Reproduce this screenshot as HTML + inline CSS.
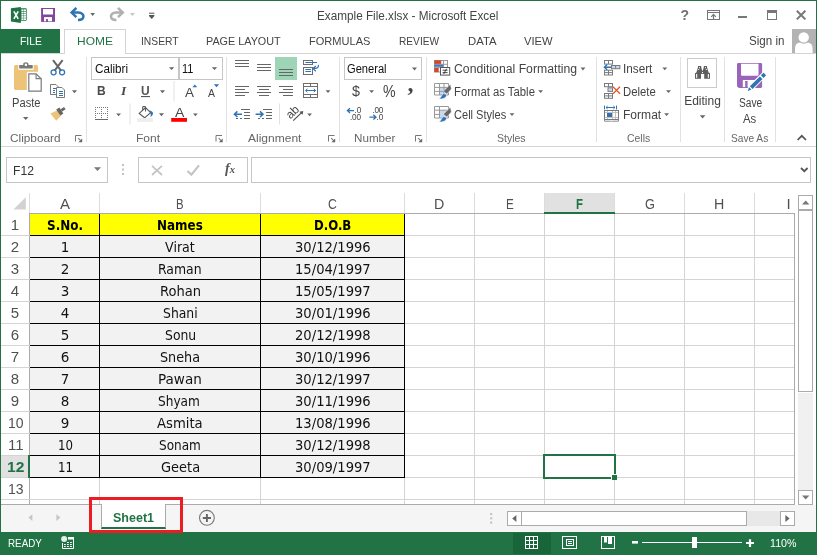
<!DOCTYPE html>
<html lang="en"><head><meta charset="utf-8"><title>Example File.xlsx - Microsoft Excel</title>
<style>
html,body{margin:0;padding:0;background:#fff;}
#app{position:relative;width:817px;height:555px;overflow:hidden;background:#fff;font-family:"Liberation Sans",sans-serif;}
#app div,#app svg,#app span{position:absolute;box-sizing:border-box;}
.t{white-space:pre;line-height:1;transform-origin:0 0;}
#frame{left:0;top:0;width:817px;height:555px;border:1px solid #217346;border-bottom:none;z-index:50;pointer-events:none;}
#titlebar{left:1px;top:1px;width:815px;height:28px;background:#fff;}
#tabs{left:1px;top:29px;width:815px;height:25px;border-bottom:1px solid #d4d4d4;}
#tab-file{left:0;top:0;width:59px;height:24px;background:#217346;}
#tab-home{left:63px;top:0;width:62px;height:25px;background:#fff;border:1px solid #d4d4d4;border-bottom:none;}
#ribbon{left:1px;top:54px;width:815px;height:93px;background:#fff;border-bottom:1px solid #d4d4d4;}
.sep{width:1px;background:#e2e2e2;top:3px;height:85px;}
.box{border:1px solid #c6c6c6;background:#fff;}
#fbar{left:1px;top:147px;width:815px;height:46px;background:#fff;}
#grid{left:1px;top:193px;width:794px;height:312px;background:#fff;overflow:hidden;}
.vl{width:1px;background:#d4d4d4;top:0;}
.hl{height:1px;background:#d4d4d4;left:0;}
.bk{background:#000;}
#sheetbar{left:1px;top:505px;width:815px;height:27px;background:#f5f5f5;}
#status{left:0;top:532px;width:817px;height:23px;background:#217346;}

</style></head>
<body>
<div id="app">
<div id="titlebar"></div>
<div id="tabs">
  <div id="tab-file"></div>
  <div id="tab-home"></div>
  <div id="avatar" style="left:791px;top:0;width:24px;height:24px;background:#b3b3b3;overflow:hidden;">
    <svg width="24" height="24" viewBox="0 0 24 24" style="left:0;top:0"><path d="M3 24 V19.4 Q3 13.4 8.4 13.4 H15 Q20.6 13.4 20.6 19.4 V24 Z" fill="#fff"/><circle cx="11.7" cy="8.4" r="6.3" fill="#b3b3b3"/><circle cx="11.7" cy="8.4" r="5.2" fill="#fff"/></svg>
  </div>
</div>
<div id="ribbon">
  <div class="sep" style="left:85px"></div>
  <div class="sep" style="left:225px"></div>
  <div class="sep" style="left:338px"></div>
  <div class="sep" style="left:425px"></div>
  <div class="sep" style="left:595px"></div>
  <div class="sep" style="left:679px"></div>
  <div class="sep" style="left:723px"></div>
  <div class="sep" style="left:774px"></div>
  <div class="box" style="left:90px;top:3px;width:88px;height:23px"></div>
  <div class="box" style="left:178px;top:3px;width:44px;height:23px"></div>
  <div class="box" style="left:343px;top:3px;width:78px;height:23px"></div>
  <div style="left:274px;top:3px;width:22px;height:23px;background:#9fd5b7"></div>
  <div class="box" style="left:686px;top:4px;width:30px;height:30px;border-color:#cbcbcb"></div>
</div>
<div id="fbar">
  <div class="box" style="left:5px;top:10px;width:102px;height:26px"></div>
  <div class="box" style="left:137px;top:10px;width:110px;height:26px"></div>
  <div class="box" style="left:250px;top:10px;width:560px;height:26px"></div>
</div>
<div id="grid">
<div style="left:543px;top:0;width:71px;height:20px;background:#e1e1e1"></div>
<div style="left:543px;top:19px;width:71px;height:2px;background:#217346;z-index:3"></div>
<div style="left:0;top:263px;width:28px;height:21px;background:#e1e1e1"></div>
<div style="left:27px;top:262px;width:2px;height:23px;background:#217346;z-index:3"></div>
<div class="vl" style="left:28px;top:0;height:20px;background:#dcdcdc"></div>
<div class="vl" style="left:98px;top:0;height:20px;background:#dcdcdc"></div>
<div class="vl" style="left:259px;top:0;height:20px;background:#dcdcdc"></div>
<div class="vl" style="left:403px;top:0;height:20px;background:#dcdcdc"></div>
<div class="vl" style="left:473px;top:0;height:20px;background:#dcdcdc"></div>
<div class="vl" style="left:543px;top:0;height:20px;background:#dcdcdc"></div>
<div class="vl" style="left:613px;top:0;height:20px;background:#dcdcdc"></div>
<div class="vl" style="left:683px;top:0;height:20px;background:#dcdcdc"></div>
<div class="vl" style="left:753px;top:0;height:20px;background:#dcdcdc"></div>
<div class="hl" style="left:28px;top:20px;width:765px;background:#ababab"></div>
<div class="vl" style="left:28px;top:20px;height:292px;background:#ababab"></div>
<div class="vl" style="left:98px;top:21px;height:291px"></div>
<div class="vl" style="left:259px;top:21px;height:291px"></div>
<div class="vl" style="left:403px;top:21px;height:291px"></div>
<div class="vl" style="left:473px;top:21px;height:291px"></div>
<div class="vl" style="left:543px;top:21px;height:291px"></div>
<div class="vl" style="left:613px;top:21px;height:291px"></div>
<div class="vl" style="left:683px;top:21px;height:291px"></div>
<div class="vl" style="left:753px;top:21px;height:291px"></div>
<div class="hl" style="left:0;top:42px;width:794px"></div>
<div class="hl" style="left:0;top:64px;width:794px"></div>
<div class="hl" style="left:0;top:86px;width:794px"></div>
<div class="hl" style="left:0;top:108px;width:794px"></div>
<div class="hl" style="left:0;top:130px;width:794px"></div>
<div class="hl" style="left:0;top:152px;width:794px"></div>
<div class="hl" style="left:0;top:174px;width:794px"></div>
<div class="hl" style="left:0;top:196px;width:794px"></div>
<div class="hl" style="left:0;top:218px;width:794px"></div>
<div class="hl" style="left:0;top:240px;width:794px"></div>
<div class="hl" style="left:0;top:262px;width:794px"></div>
<div class="hl" style="left:0;top:284px;width:794px"></div>
<div class="hl" style="left:0;top:306px;width:794px"></div>
<div class="vl" style="left:793px;top:20px;height:292px;background:#ababab"></div>
<div class="hl" style="left:0;top:311px;width:794px;background:#ababab"></div>
<div style="left:29px;top:21px;width:374px;height:21px;background:#ffff00"></div>
<div style="left:29px;top:43px;width:374px;height:241px;background:#f2f2f2"></div>
<div class="vl bk" style="left:98px;top:21px;height:264px"></div>
<div class="vl bk" style="left:259px;top:21px;height:264px"></div>
<div class="vl bk" style="left:403px;top:21px;height:264px"></div>
<div class="hl bk" style="left:29px;top:42px;width:375px"></div>
<div class="hl bk" style="left:29px;top:64px;width:375px"></div>
<div class="hl bk" style="left:29px;top:86px;width:375px"></div>
<div class="hl bk" style="left:29px;top:108px;width:375px"></div>
<div class="hl bk" style="left:29px;top:130px;width:375px"></div>
<div class="hl bk" style="left:29px;top:152px;width:375px"></div>
<div class="hl bk" style="left:29px;top:174px;width:375px"></div>
<div class="hl bk" style="left:29px;top:196px;width:375px"></div>
<div class="hl bk" style="left:29px;top:218px;width:375px"></div>
<div class="hl bk" style="left:29px;top:240px;width:375px"></div>
<div class="hl bk" style="left:29px;top:262px;width:375px"></div>
<div class="hl bk" style="left:29px;top:284px;width:375px"></div>
<div style="left:542px;top:261px;width:73px;height:25px;border:2px solid #217346;z-index:4"></div>
<div style="left:610px;top:281px;width:6px;height:6px;background:#217346;border:1px solid #fff;border-right:none;border-bottom:none;z-index:5"></div>
<svg width="14" height="14" style="left:11px;top:3px"><path d="M13.8 1.2 V13.6 H1.4 Z" fill="#d2d2d2"/></svg>
</div>
<div id="vscroll" style="left:798px;top:195px;width:15px;height:310px;background:#f0f0f0;">
  <div class="box" style="left:0;top:0;width:15px;height:15px;border-color:#ababab"></div>
  <div class="box" style="left:0;top:15px;width:15px;height:182px;border-color:#ababab"></div><div style="left:0;top:197px;width:15px;height:1px;background:#fff"></div>
  <div class="box" style="left:0;top:295px;width:15px;height:15px;border-color:#ababab"></div>
</div>
<div id="sheetbar">
  <div id="sheettab" style="left:100px;top:-1px;width:65px;height:25px;background:#fff;border-left:1px solid #ababab;border-right:1px solid #ababab;border-bottom:2px solid #217346"></div>
  <div id="hscroll" style="left:506px;top:6px;width:288px;height:15px;background:#e8e8e8">
    <div class="box" style="left:0;top:0;width:15px;height:15px;border-color:#ababab"></div>
    <div class="box" style="left:14px;top:0;width:226px;height:15px;border-color:#ababab"></div>
    <div class="box" style="left:273px;top:0;width:15px;height:15px;border-color:#ababab"></div>
  </div>
</div>
<div id="redbox" style="left:89px;top:497px;width:94px;height:36px;border:3px solid #ec1c24;z-index:20"></div>
<div id="status"></div>
<svg id="icons" width="817" height="555" viewBox="0 0 817 555" style="left:0;top:0;z-index:10;will-change:transform">
<g fill="#666" shape-rendering="crispEdges">
  <!-- top align -->
  <rect x="235" y="60" width="14" height="1"/><rect x="235" y="63" width="14" height="1"/><rect x="235" y="66" width="14" height="1"/>
  <!-- middle -->
  <rect x="257" y="64" width="14" height="1"/><rect x="257" y="67" width="14" height="1"/><rect x="257" y="70" width="14" height="1"/>
  <!-- bottom (selected) -->
  <rect x="279" y="69" width="14" height="1"/><rect x="279" y="72" width="14" height="1"/><rect x="279" y="75" width="14" height="1"/>
  <!-- left -->
  <rect x="235" y="86" width="14" height="1"/><rect x="235" y="89" width="10" height="1"/><rect x="235" y="92" width="14" height="1"/><rect x="235" y="95" width="10" height="1"/>
  <!-- center -->
  <rect x="257" y="86" width="14" height="1"/><rect x="259" y="89" width="10" height="1"/><rect x="257" y="92" width="14" height="1"/><rect x="259" y="95" width="10" height="1"/>
  <!-- right -->
  <rect x="279" y="86" width="14" height="1"/><rect x="283" y="89" width="10" height="1"/><rect x="279" y="92" width="14" height="1"/><rect x="283" y="95" width="10" height="1"/>
  <!-- decrease indent lines -->
  <rect x="241" y="109" width="9" height="1"/><rect x="244" y="112" width="6" height="1"/><rect x="244" y="115" width="6" height="1"/>
  <rect x="236" y="118" width="2" height="1"/><rect x="240" y="118" width="2" height="1"/><rect x="244" y="118" width="6" height="1"/>
  <!-- increase indent lines -->
  <rect x="263" y="109" width="9" height="1"/><rect x="266" y="112" width="6" height="1"/><rect x="266" y="115" width="6" height="1"/>
  <rect x="258" y="118" width="2" height="1"/><rect x="262" y="118" width="2" height="1"/><rect x="266" y="118" width="6" height="1"/>
</g>
<!-- indent arrows -->
<g fill="none" stroke="#2e74b5" stroke-width="1.5">
  <path d="M234.4 114.2 H242 M237.4 111.4 L234.4 114.2 L237.4 117"/>
  <path d="M255.6 114.2 H263 M260 111.4 L263 114.2 L260 117"/>
</g>
<rect x="279" y="103.5" width="1" height="21" fill="#e2e2e2"/>
<!-- wrap text -->
<g fill="#fff" stroke="#6e6e6e" stroke-width="1">
  <rect x="303.5" y="60.5" width="9" height="4"/>
  <rect x="303.5" y="67.5" width="9" height="7"/>
</g>
<g fill="none" stroke="#2e74b5" stroke-width="1">
  <path d="M305.4 62.5 H317"/>
  <path d="M305.4 69.5 H311 M305.4 71.5 H311"/>
  <path d="M318.4 64.8 C318.8 67.6 317 68.6 313.2 68.6 M315.8 66 L313 68.6 L315.8 71.2" stroke-width="1.2"/>
</g>
<!-- merge & center -->
<g fill="#fff" stroke="#6e6e6e" stroke-width="1">
  <rect x="303.5" y="83.5" width="14" height="14"/>
  <path d="M303.5 86.5 H317.5 M303.5 94.5 H317.5 M310.5 83.5 V86.5 M310.5 94.5 V97.5" fill="none"/>
</g>
<path d="M305.6 90.5 H315.6 M307.4 88.8 L305.6 90.5 L307.4 92.2 M313.8 88.8 L315.6 90.5 L313.8 92.2" fill="none" stroke="#2e74b5" stroke-width="1"/>
<path d="M325.6 90.2 H330.4 L328 93 Z" fill="#666"/>
<!-- orientation -->
<path d="M293.2 120.6 L301.6 112.6" fill="none" stroke="#505050" stroke-width="1.2"/>
<path d="M303.3 110.9 L299.4 111.7 L302.5 114.8 Z" fill="#505050"/>
<text x="0" y="0" transform="translate(290.6 119.6) rotate(-45)" font-family="Liberation Sans, sans-serif" font-size="12" fill="#444">ab</text>
<path d="M307.2 113.4 H312 L309.6 116.2 Z" fill="#666"/>
<!-- formula bar -->
<path d="M94 167.2 H101 L97.5 171 Z" fill="#777"/>
<g fill="#c2c2c2"><rect x="122" y="164" width="2" height="2"/><rect x="122" y="168.5" width="2" height="2"/><rect x="122" y="173" width="2" height="2"/></g>
<path d="M152 165.8 L162 175 M162 165.8 L152 175" stroke="#c4c4c4" stroke-width="1.7" fill="none"/>
<path d="M187.4 171 L191.4 174.6 L199 165.4" stroke="#c4c4c4" stroke-width="2.2" fill="none"/>
<path d="M801 168 L804.3 171.2 L807.6 168" stroke="#555" stroke-width="1.8" fill="none"/>
<!-- scroll arrows -->
<path d="M802 204.6 H809.4 L805.7 200.6 Z" fill="#777"/>
<path d="M802 495.4 H809.4 L805.7 499.4 Z" fill="#777"/>
<path d="M516.4 515 V522 L512.2 518.5 Z" fill="#666"/>
<path d="M785.4 515 V522 L789.6 518.5 Z" fill="#666"/>
<!-- sheet nav arrows -->
<path d="M32.4 514.2 V521 L28.4 517.6 Z" fill="#c6c6c6"/>
<path d="M56.4 514.2 V521 L60.4 517.6 Z" fill="#c6c6c6"/>
<!-- new sheet button -->
<circle cx="206.9" cy="517.8" r="7.4" fill="none" stroke="#7a7a7a" stroke-width="1.1"/>
<path d="M202.8 518 H211 M206.9 513.9 V522.1" stroke="#666" stroke-width="1.9" fill="none"/>
<!-- dots before hscroll -->
<g fill="#c0c0c0"><rect x="490.2" y="513" width="2" height="2"/><rect x="490.2" y="517.3" width="2" height="2"/><rect x="490.2" y="521.6" width="2" height="2"/></g>
<!-- status bar: macro icon -->
<g>
  <path d="M62.5 543 V548.5 H73.5 V537.6 H68" fill="none" stroke="#fff" stroke-width="1"/>
  <rect x="68" y="537.1" width="6" height="2.4" fill="#fff"/>
  <circle cx="64.1" cy="539.1" r="3.7" fill="#217346"/>
  <circle cx="64.1" cy="539.1" r="3" fill="#e6efe9"/>
  <g fill="#fff">
    <rect x="67" y="542" width="1.8" height="1"/><rect x="70" y="542" width="1.8" height="1"/>
    <rect x="64" y="544" width="1.8" height="1"/><rect x="67" y="544" width="1.8" height="1"/><rect x="70" y="544" width="1.8" height="1"/>
    <rect x="64" y="546" width="1.8" height="1"/><rect x="67" y="546" width="1.8" height="1"/><rect x="70" y="546" width="1.8" height="1"/>
  </g>
</g>
<!-- view buttons -->
<rect x="513" y="533" width="38" height="21" fill="#19653a"/>
<g fill="none" stroke="#fff" stroke-width="1" shape-rendering="crispEdges">
  <rect x="525.5" y="536.5" width="12" height="12"/>
  <path d="M529.5 536.5 V548.5 M533.5 536.5 V548.5 M525.5 540.5 H537.5 M525.5 544.5 H537.5"/>
  <rect x="562.5" y="536.5" width="14" height="12"/>
  <rect x="566.5" y="539.5" width="7" height="6"/>
  <path d="M568 541.5 H572 M568 543.5 H572"/>
  <rect x="601.5" y="536.5" width="13" height="12"/>
</g>
<rect x="604" y="536.5" width="3" height="6" fill="#fff"/><rect x="608" y="536.5" width="4" height="7.5" fill="#fff"/>
<!-- zoom slider -->
<rect x="632" y="541" width="6" height="2.6" fill="#fff"/>
<rect x="642" y="542" width="100" height="1" fill="#fff"/>
<rect x="692" y="537" width="5" height="11" fill="#fff"/>
<path d="M746 543 H754 M750 539.2 V547" stroke="#fff" stroke-width="2.2" fill="none"/>
<!-- Insert -->
<g fill="#fff" stroke="#7a7a7a" stroke-width="1">
  <rect x="604.5" y="60.5" width="8" height="3.6"/>
  <path d="M608.5 60.5 V64" fill="none"/>
  <rect x="604.5" y="70.2" width="8" height="4.8"/>
  <path d="M608.5 70.2 V75 M604.5 72.6 H612.5" fill="none"/>
  <rect x="611.5" y="65.5" width="8.4" height="3.2" fill="#c5daf0"/>
  <path d="M615.6 65.5 V68.7" fill="none"/>
</g>
<path d="M604.4 67.2 H611 M607.2 64.6 L604.4 67.2 L607.2 69.8" fill="none" stroke="#2e74b5" stroke-width="1.4"/>
<!-- Delete -->
<g fill="#fff" stroke="#7a7a7a" stroke-width="1">
  <rect x="604.5" y="83.5" width="8" height="3.2"/>
  <path d="M608.5 83.5 V86.7" fill="none"/>
  <rect x="608" y="87.8" width="4.5" height="3.6" fill="#c5daf0"/>
  <rect x="604.5" y="93.5" width="8" height="4.8"/>
  <path d="M608.5 93.5 V98.3 M604.5 95.9 H612.5" fill="none"/>
</g>
<path d="M613 86.8 L620 93.8 M620 86.8 L613 93.8" stroke="#e8562a" stroke-width="1.25" fill="none"/>
<!-- Format -->
<path d="M604.5 105.6 V109.4 M616.5 105.6 V109.4 M606 107.5 H615 M607.6 106 L606 107.5 L607.6 109 M613.4 106 L615 107.5 L613.4 109" stroke="#2e74b5" stroke-width="1" fill="none"/>
<g fill="#fff" stroke="#7a7a7a" stroke-width="1">
  <rect x="604.5" y="110.5" width="14" height="9"/>
  <path d="M607.5 110.5 V119.5 M612.5 110.5 V119.5 M615.5 110.5 V119.5 M604.5 112.5 H618.5 M604.5 117.5 H618.5" fill="none" stroke="#c2c2c2"/>
  <rect x="604.5" y="110.5" width="14" height="9" fill="none"/>
  <path d="M604.5 119.5 V121.2 H610.6 Q611.6 121.6 612.6 121.2 H618.5 V119.5" fill="none" stroke="#8a8a8a"/>
</g>
<rect x="607" y="113" width="5" height="4" fill="#2e74b5"/>
<path d="M662.4 67.4 H667.2 L664.8 70.2 Z" fill="#666"/>
<path d="M666 90.2 H671 L668.5 93 Z" fill="#666"/>
<path d="M664.2 113.2 H669 L666.6 116 Z" fill="#666"/>
<!-- Paste -->
<g>
  <rect x="14" y="64.9" width="24" height="25" rx="1.6" fill="#ecc377"/>
  <rect x="18.3" y="64" width="15.4" height="5.8" fill="#fff"/>
  <rect x="26.8" y="71.8" width="12" height="19" fill="#fff"/>
  <path d="M19.2 68.6 V64.9 H23.2 V63.8 Q23.2 62.2 25.9 62.2 Q28.5 62.2 28.5 63.8 V64.9 H32.7 V68.6 Z" fill="#787878"/>
  <rect x="24.8" y="63.7" width="2.2" height="2.2" fill="#fff"/>
  <path d="M28.8 73.8 H36 L41.2 78.8 V91.1 H28.8 Z" fill="#fff" stroke="#7a7a7a" stroke-width="1.2"/>
  <path d="M36.1 73.8 V78.6 H41.2" fill="none" stroke="#7a7a7a" stroke-width="1.1"/>
</g>
<path d="M23 117 H28.4 L25.7 120 Z" fill="#666"/>
<!-- Cut -->
<g fill="none">
  <path d="M53 60.2 L61.2 70.8 M62.6 60.2 L54.4 70.8" stroke="#666" stroke-width="2"/>
  <circle cx="53.6" cy="72.3" r="2.5" stroke="#2e74b5" stroke-width="1.3"/>
  <circle cx="62.1" cy="72.3" r="2.5" stroke="#2e74b5" stroke-width="1.3"/>
</g>
<!-- Copy -->
<g fill="#fff" stroke="#7a7a7a" stroke-width="1">
  <path d="M50.5 84.5 H56 L58.5 87 V94.5 H50.5 Z"/>
  <path d="M56.5 87.5 H62 L64.5 90 V97.5 H56.5 Z"/>
</g>
<path d="M52.5 88.5 H55.5 M52.5 90.5 H55 M52.5 92.5 H55 M58.5 91.5 H62.5 M58.5 93.5 H62.5 M58.5 95.5 H62.5" stroke="#2e74b5" stroke-width="1" fill="none" shape-rendering="crispEdges"/>
<path d="M72 90.2 H77 L74.5 93.2 Z" fill="#666"/>
<!-- Format painter -->
<g>
  <path d="M50.4 113.4 L57.6 110.2 L61.4 115.6 L56.2 120.8 Z" fill="#ecc377"/>
  <path d="M56.2 109.4 L59.4 107.6 L63.4 113.4 L60.4 115.4 Z" fill="#666"/>
  <path d="M60.6 109.2 L64 107 L65.6 109.2 L62.2 111.4 Z" fill="#666"/>
</g>
<!-- binoculars -->
<g fill="#5e5e5e">
  <path d="M695 78.8 V73.2 L696.4 72.6 L698 67.2 V66 H701.2 V67.2 L702 70 V74 H701 V78.8 Z"/>
  <path d="M710 78.8 V73.2 L708.6 72.6 L707 67.2 V66 H703.8 V67.2 L703 70 V74 H704.2 V78.8 Z"/>
  <rect x="701" y="70.6" width="3" height="3.4"/>
</g>
<g fill="#fff">
  <rect x="696.1" y="74" width="1.1" height="3.8"/><rect x="707.8" y="74" width="1.1" height="3.8"/>
  <rect x="699" y="67.2" width="1" height="1"/><rect x="705" y="67.2" width="1" height="1"/>
  <rect x="698.2" y="69" width="1" height="1"/><rect x="705.8" y="69" width="1" height="1"/>
  <rect x="702" y="72" width="1" height="1.2"/>
</g>
<path d="M699.8 115.2 H705.4 L702.6 118.4 Z" fill="#666"/>
<!-- Save As big icon -->
<g>
  <path d="M737 64.2 Q737 62.9 738.3 62.9 H760.8 Q762.1 62.9 762.1 64.2 V86.6 Q762.1 87.9 760.8 87.9 H738.8 L737 86.2 Z" fill="#9a64ba"/>
  <path d="M741 63.8 H758.5 V74.6 Q758.5 75.8 757.3 75.8 H742.2 Q741 75.8 741 74.6 Z" fill="#fff"/>
  <rect x="742.8" y="80" width="12.5" height="7.1" fill="#fff"/>
  <rect x="745.2" y="81" width="2.4" height="7" fill="#9a64ba"/>
  <path d="M763.5 72.7 L766.1 75.3 L752.4 89 L747.6 91 L749.4 86.4 Z" fill="#fff" stroke="#fff" stroke-width="2" stroke-linejoin="round"/>
  <path d="M759.9 76.5 L762.5 79.1 L752.5 88.9 L749.9 86.3 Z" fill="#2e74b5"/>
  <path d="M760.9 75.3 L763.5 72.7 L766.1 75.3 L763.5 77.9 Z" fill="#2e74b5"/>
  <path d="M749 87.2 L751.4 89.6 L747.8 91 Z" fill="#2e74b5"/>
</g>
<!-- collapse chevron -->
<path d="M797.6 140 L801.8 135.8 L806 140" fill="none" stroke="#555" stroke-width="1.7"/>
<!-- dropdown arrows in font boxes -->
<path d="M169 67.2 H174.2 L171.6 70 Z" fill="#666"/>
<path d="M211.8 67.2 H217.2 L214.5 70 Z" fill="#666"/>
<!-- underline for U + arrow -->
<rect x="141" y="96" width="9" height="1.1" fill="#555"/>
<path d="M160 90.2 H165 L162.5 93.2 Z" fill="#666"/>
<rect x="173.5" y="81" width="1" height="20.5" fill="#e2e2e2"/>
<!-- grow / shrink triangles -->
<path d="M192.4 87.2 H197.2 L194.8 84.4 Z" fill="#2e74b5"/>
<path d="M213.8 84.2 H219.2 L216.5 87.2 Z" fill="#2e74b5"/>
<!-- borders icon -->
<g fill="#787878" shape-rendering="crispEdges"><rect x="95" y="107" width="1" height="1"/><rect x="95" y="109" width="1" height="1"/><rect x="95" y="111" width="1" height="1"/><rect x="95" y="113" width="1" height="1"/><rect x="95" y="115" width="1" height="1"/><rect x="95" y="117" width="1" height="1"/><rect x="97" y="107" width="1" height="1"/><rect x="97" y="113" width="1" height="1"/><rect x="99" y="107" width="1" height="1"/><rect x="99" y="113" width="1" height="1"/><rect x="101" y="107" width="1" height="1"/><rect x="101" y="109" width="1" height="1"/><rect x="101" y="111" width="1" height="1"/><rect x="101" y="113" width="1" height="1"/><rect x="101" y="115" width="1" height="1"/><rect x="101" y="117" width="1" height="1"/><rect x="103" y="107" width="1" height="1"/><rect x="103" y="113" width="1" height="1"/><rect x="105" y="107" width="1" height="1"/><rect x="105" y="113" width="1" height="1"/><rect x="107" y="107" width="1" height="1"/><rect x="107" y="109" width="1" height="1"/><rect x="107" y="111" width="1" height="1"/><rect x="107" y="113" width="1" height="1"/><rect x="107" y="115" width="1" height="1"/><rect x="107" y="117" width="1" height="1"/></g>
<rect x="95" y="119" width="13" height="1" fill="#6a6a6a" shape-rendering="crispEdges"/>
<path d="M116.2 113.4 H121 L118.6 116.2 Z" fill="#666"/>
<rect x="129.5" y="103.5" width="1" height="21" fill="#e2e2e2"/>
<!-- fill bucket -->
<g>
  <path d="M145.6 107.6 L150.6 112.6 L144.6 117.8 L139.2 113.4 Z" fill="#fff" stroke="#555" stroke-width="1.1"/>
  <path d="M142.7 110 V107.4 Q142.7 106.5 143.6 106.5 H144.6 Q145.5 106.5 145.5 107.4 V111.4" fill="none" stroke="#555" stroke-width="1.1"/>
  <path d="M149.2 110.2 Q153.4 111.4 153 114 Q152.4 116 150.3 117.2 Q151.2 114.6 150.4 112.6 Z" fill="#2e74b5"/>
  <rect x="137.2" y="118" width="15.7" height="3.9" fill="#eeeeee"/>
</g>
<path d="M159 113.2 H164 L161.5 116.2 Z" fill="#666"/>
<!-- font color bar -->
<rect x="171.2" y="118" width="15.8" height="3.8" fill="#ff0000"/>
<path d="M193 113.4 H197.8 L195.4 116.2 Z" fill="#666"/>
<!-- dialog launchers -->
<path d="M75.5 141.5 V135.5 H81.5" fill="none" stroke="#777" stroke-width="1"/>
<path d="M78.2 138.2 L80.6 140.6" fill="none" stroke="#777" stroke-width="1.1"/>
<path d="M82.2 138.4 V142.2 H78.4 Z" fill="#666"/>
<path d="M216.0 141.5 V135.5 H222.0" fill="none" stroke="#777" stroke-width="1"/>
<path d="M218.7 138.2 L221.1 140.6" fill="none" stroke="#777" stroke-width="1.1"/>
<path d="M222.7 138.4 V142.2 H218.9 Z" fill="#666"/>
<path d="M328.5 141.5 V135.5 H334.5" fill="none" stroke="#777" stroke-width="1"/>
<path d="M331.2 138.2 L333.6 140.6" fill="none" stroke="#777" stroke-width="1.1"/>
<path d="M335.2 138.4 V142.2 H331.4 Z" fill="#666"/>
<path d="M415.5 141.5 V135.5 H421.5" fill="none" stroke="#777" stroke-width="1"/>
<path d="M418.2 138.2 L420.6 140.6" fill="none" stroke="#777" stroke-width="1.1"/>
<path d="M422.2 138.4 V142.2 H418.4 Z" fill="#666"/>
<path d="M412 67.6 H417 L414.5 70.4 Z" fill="#666"/>
<path d="M369.2 90.2 H374 L371.6 93 Z" fill="#666"/>
<!-- increase decimal -->
<path d="M347.4 110.6 H354 M350 108.2 L347.4 110.6 L350 113" fill="none" stroke="#2e74b5" stroke-width="1.3"/>
<text x="354.6" y="113" font-family="Liberation Sans, sans-serif" font-size="8.2" fill="#444" textLength="6.6">.0</text>
<text x="350" y="119.6" font-family="Liberation Sans, sans-serif" font-size="8.2" fill="#444" textLength="11">.00</text>
<!-- decrease decimal -->
<text x="372.4" y="113" font-family="Liberation Sans, sans-serif" font-size="8.2" fill="#444" textLength="11">.00</text>
<path d="M369.4 117.2 H376 M373.4 114.8 L376 117.2 L373.4 119.6" fill="none" stroke="#2e74b5" stroke-width="1.3"/>
<text x="376.6" y="119.6" font-family="Liberation Sans, sans-serif" font-size="8.2" fill="#444" textLength="6.6">.0</text>
<!-- Conditional Formatting -->
<g>
  <rect x="434.5" y="60.5" width="13" height="11.5" fill="#fff" stroke="#9a9a9a" stroke-width="1"/>
  <path d="M443.5 60.5 V72 M434.5 64.3 H447.5 M434.5 67.6 H447.5" stroke="#9a9a9a" stroke-width="1" fill="none"/>
  <rect x="434.4" y="60.4" width="6.8" height="3.5" fill="#d24726"/>
  <rect x="434.4" y="64.6" width="8.8" height="2.2" fill="#4472c4"/>
  <rect x="434.4" y="68" width="4.3" height="4.1" fill="#d24726"/>
  <rect x="440.5" y="67.5" width="9.2" height="7.6" fill="#fff" stroke="#555" stroke-width="1"/>
  <path d="M442.6 70.2 H447.6 M442.6 72.6 H447.6 M446.6 68.8 L443.6 74" stroke="#333" stroke-width="0.9" fill="none"/>
</g>
<!-- Format as Table -->
<g>
  <rect x="440" y="87.5" width="8.5" height="7.5" fill="#c5daf0"/>
  <path d="M434.5 83.5 H448.5 V95 H434.5 Z M439.5 83.5 V95 M444 83.5 V95 M434.5 87.4 H448.5 M434.5 91.4 H448.5" fill="none" stroke="#999" stroke-width="1"/>
  <path d="M450.4 84.2 L451.4 89 L446.8 94 L443.4 91.2 Z" fill="#666" stroke="#fff" stroke-width="0.5"/>
  <path d="M438.2 98.8 C441 98.6 441 95.6 443.4 93.6 L446.6 94.4 C447 97.4 443.6 99.4 438.2 98.8 Z" fill="#2e74b5" stroke="#fff" stroke-width="0.6"/>
</g>
<!-- Cell Styles -->
<g>
  <rect x="440" y="110.5" width="8.5" height="7" fill="#c5daf0"/>
  <path d="M434.5 106.5 H448.5 V118 H434.5 Z M439.5 106.5 V118 M434.5 110.2 H448.5 M434.5 114.4 H439.5" fill="none" stroke="#999" stroke-width="1"/>
  <path d="M450.4 107.2 L451.4 112 L446.8 117 L443.4 114.2 Z" fill="#666" stroke="#fff" stroke-width="0.5"/>
  <path d="M438.2 121.8 C441 121.6 441 118.6 443.4 116.6 L446.6 117.4 C447 120.4 443.6 122.4 438.2 121.8 Z" fill="#2e74b5" stroke="#fff" stroke-width="0.6"/>
</g>
<path d="M580.6 67.6 H585.4 L583 70.4 Z" fill="#666"/>
<path d="M538.2 90.2 H543 L540.6 93 Z" fill="#666"/>
<path d="M509.6 113.2 H514.4 L512 116 Z" fill="#666"/>
<!-- Excel logo -->
<g>
  <rect x="20" y="8.3" width="6.7" height="12.4" rx="0.8" fill="#217346"/>
  <g fill="#fff"><rect x="21.4" y="9.4" width="2.2" height="1.7"/><rect x="24" y="9.4" width="2" height="1.7"/><rect x="21.4" y="11.7" width="2.2" height="1.7"/><rect x="24" y="11.7" width="2" height="1.7"/><rect x="21.4" y="13.9" width="2.2" height="1.7"/><rect x="24" y="13.9" width="2" height="1.7"/><rect x="21.4" y="16.1" width="2.2" height="1.7"/><rect x="24" y="16.1" width="2" height="1.7"/><rect x="21.4" y="18.3" width="2.2" height="1.7"/><rect x="24" y="18.3" width="2" height="1.7"/></g>
  <path d="M10.9 8.3 L20.9 6.9 V22.9 L10.9 21.5 Z" fill="#217346"/>
  <path d="M13.9 11.3 L18.2 18.8 M18.2 11.3 L13.9 18.8" stroke="#fff" stroke-width="1.6" fill="none"/>
</g>
<!-- Save (QAT) -->
<g>
  <rect x="41.1" y="8" width="13.9" height="13.9" fill="#8246a0"/>
  <rect x="43" y="9" width="10" height="5.5" fill="#fff"/>
  <rect x="44" y="17.1" width="8" height="4.2" fill="#fff"/>
  <rect x="46.1" y="19" width="1.8" height="3" fill="#8246a0"/>
</g>
<!-- Undo -->
<g fill="none" stroke="#2e74b5" stroke-width="2.5" stroke-linecap="butt">
  <path d="M72.4 12.6 H78 C82.6 12.6 83.6 15.4 83.4 16.6 C83.2 18.8 81.2 20 78 20"/>
  <path d="M76.4 7.8 L71.6 12.6 L76.4 17.2"/>
</g>
<path d="M90.3 13 H95 L92.65 16 Z" fill="#666"/>
<!-- Redo -->
<g fill="none" stroke="#b0b0b0" stroke-width="2.5">
  <path d="M122 12.6 H116.4 C111.8 12.6 110.8 15.4 111 16.6 C111.2 18.8 113.2 20 116.4 20"/>
  <path d="M118 7.8 L122.8 12.6 L118 17.2"/>
</g>
<path d="M130 13 H134.8 L132.4 16 Z" fill="#c4c4c4"/>
<!-- Customize QAT -->
<rect x="149" y="12.7" width="5.4" height="1" fill="#555"/>
<rect x="149" y="15" width="5.4" height="1" fill="#555"/>
<path d="M149 16 H154.4 L151.7 19 Z" fill="#555"/>
<!-- Window controls -->
<g fill="none" stroke="#777" stroke-width="1">
  <rect x="707.5" y="10.5" width="12" height="9"/>
  <path d="M707.5 12.5 H719.5"/>
  <path d="M713.5 19.5 V14.5 M711.2 16.8 L713.5 14.4 L715.8 16.8" stroke-width="1.2"/>
</g>
<rect x="738" y="16" width="9" height="2" fill="#777"/>
<rect x="767.5" y="11.5" width="9" height="8" fill="none" stroke="#777" stroke-width="1"/>
<rect x="767" y="10" width="10" height="3" fill="#777"/>
<path d="M796.8 10.8 L805.4 19.4 M805.4 10.8 L796.8 19.4" stroke="#777" stroke-width="2" fill="none"/>

</svg>
<div id="frame"></div>

<div id="texts" style="left:0;top:0;z-index:15;will-change:transform">
<span class="t" style="left:317.0px;top:10.4px;font:400 12.5px/1 'Liberation Sans', sans-serif;color:#444;transform:scaleX(0.939);">Example File.xlsx - Microsoft Excel</span>
<span class="t" style="left:19.5px;top:36.2px;font:400 11.5px/1 'Liberation Sans', sans-serif;color:#fff;transform:scaleX(0.901);">FILE</span>
<span class="t" style="left:76.5px;top:36.2px;font:400 11.5px/1 'Liberation Sans', sans-serif;color:#217346;transform:scaleX(1.041);">HOME</span>
<span class="t" style="left:140.5px;top:36.2px;font:400 11.5px/1 'Liberation Sans', sans-serif;color:#444;transform:scaleX(0.896);">INSERT</span>
<span class="t" style="left:205.9px;top:36.2px;font:400 11.5px/1 'Liberation Sans', sans-serif;color:#444;transform:scaleX(0.940);">PAGE LAYOUT</span>
<span class="t" style="left:309.3px;top:36.2px;font:400 11.5px/1 'Liberation Sans', sans-serif;color:#444;transform:scaleX(0.961);">FORMULAS</span>
<span class="t" style="left:399.2px;top:36.2px;font:400 11.5px/1 'Liberation Sans', sans-serif;color:#444;transform:scaleX(0.884);">REVIEW</span>
<span class="t" style="left:468.0px;top:36.2px;font:400 11.5px/1 'Liberation Sans', sans-serif;color:#444;transform:scaleX(0.987);">DATA</span>
<span class="t" style="left:524.3px;top:36.2px;font:400 11.5px/1 'Liberation Sans', sans-serif;color:#444;transform:scaleX(0.973);">VIEW</span>
<span class="t" style="left:749.2px;top:35.0px;font:400 12px/1 'Liberation Sans', sans-serif;color:#444;transform:scaleX(0.967);">Sign in</span>
<span class="t" style="left:11.5px;top:97.0px;font:400 12px/1 'Liberation Sans', sans-serif;color:#444;transform:scaleX(0.929);">Paste</span>
<span class="t" style="left:10.0px;top:132.5px;font:400 11px/1 'Liberation Sans', sans-serif;color:#666;transform:scaleX(1.074);">Clipboard</span>
<span class="t" style="left:94.5px;top:63.0px;font:400 12px/1 'Liberation Sans', sans-serif;color:#111;transform:scaleX(0.973);">Calibri</span>
<span class="t" style="left:182.2px;top:63.0px;font:400 12px/1 'Liberation Sans', sans-serif;color:#111;transform:scaleX(0.914);">11</span>
<span class="t" style="left:97.0px;top:85.0px;font:700 12px/1 'Liberation Sans', sans-serif;color:#4a4a4a;transform:scaleX(1.000);">B</span>
<span class="t" style="left:120.9px;top:83.8px;font:700 13.5px/1 'Liberation Serif', serif;color:#4a4a4a;transform:scaleX(1.000);font-style:italic;">I</span>
<span class="t" style="left:141.1px;top:85.0px;font:700 12px/1 'Liberation Sans', sans-serif;color:#555;transform:scaleX(1.000);">U</span>
<span class="t" style="left:136.3px;top:132.5px;font:400 11px/1 'Liberation Sans', sans-serif;color:#666;transform:scaleX(1.095);">Font</span>
<span class="t" style="left:247.5px;top:132.5px;font:400 11px/1 'Liberation Sans', sans-serif;color:#666;transform:scaleX(1.092);">Alignment</span>
<span class="t" style="left:347.1px;top:63.0px;font:400 12px/1 'Liberation Sans', sans-serif;color:#111;transform:scaleX(0.927);">General</span>
<span class="t" style="left:351.6px;top:82.8px;font:400 15.5px/1 'Liberation Sans', sans-serif;color:#444;transform:scaleX(0.920);">$</span>
<span class="t" style="left:383.3px;top:82.8px;font:400 16.5px/1 'Liberation Sans', sans-serif;color:#444;transform:scaleX(0.860);">%</span>
<span class="t" style="left:407.5px;top:70.5px;font:700 24px/1 'Liberation Serif', serif;color:#444;transform:scaleX(1.000);">,</span>
<span class="t" style="left:353.8px;top:132.5px;font:400 11px/1 'Liberation Sans', sans-serif;color:#666;transform:scaleX(1.058);">Number</span>
<span class="t" style="left:453.5px;top:63.0px;font:400 12px/1 'Liberation Sans', sans-serif;color:#444;transform:scaleX(1.020);">Conditional Formatting</span>
<span class="t" style="left:453.5px;top:86.0px;font:400 12px/1 'Liberation Sans', sans-serif;color:#444;transform:scaleX(0.943);">Format as Table</span>
<span class="t" style="left:453.5px;top:108.5px;font:400 12px/1 'Liberation Sans', sans-serif;color:#444;transform:scaleX(0.921);">Cell Styles</span>
<span class="t" style="left:497.2px;top:132.5px;font:400 11px/1 'Liberation Sans', sans-serif;color:#666;transform:scaleX(0.954);">Styles</span>
<span class="t" style="left:623.0px;top:63.0px;font:400 12px/1 'Liberation Sans', sans-serif;color:#444;transform:scaleX(0.979);">Insert</span>
<span class="t" style="left:623.0px;top:86.0px;font:400 12px/1 'Liberation Sans', sans-serif;color:#444;transform:scaleX(0.943);">Delete</span>
<span class="t" style="left:623.0px;top:108.5px;font:400 12px/1 'Liberation Sans', sans-serif;color:#444;transform:scaleX(1.005);">Format</span>
<span class="t" style="left:626.5px;top:132.5px;font:400 11px/1 'Liberation Sans', sans-serif;color:#666;transform:scaleX(0.949);">Cells</span>
<span class="t" style="left:684.2px;top:95.0px;font:400 12px/1 'Liberation Sans', sans-serif;color:#444;transform:scaleX(1.000);">Editing</span>
<span class="t" style="left:738.5px;top:97.0px;font:400 12px/1 'Liberation Sans', sans-serif;color:#444;transform:scaleX(0.848);">Save</span>
<span class="t" style="left:742.5px;top:112.5px;font:400 12px/1 'Liberation Sans', sans-serif;color:#444;transform:scaleX(0.942);">As</span>
<span class="t" style="left:731.2px;top:132.5px;font:400 11px/1 'Liberation Sans', sans-serif;color:#666;transform:scaleX(0.922);">Save As</span>
<span class="t" style="left:12.5px;top:165.2px;font:400 12.5px/1 'Liberation Sans', sans-serif;color:#333;transform:scaleX(0.970);">F12</span>
<span class="t" style="left:225.0px;top:161.5px;font:700 14px/1 'Liberation Serif', serif;color:#555;transform:scaleX(1.000);font-style:italic;">f</span>
<span class="t" style="left:229.8px;top:165.2px;font:700 10.5px/1 'Liberation Serif', serif;color:#555;transform:scaleX(1.000);font-style:italic;">x</span>
<span class="t" style="left:7.5px;top:537.5px;font:400 11px/1 'Liberation Sans', sans-serif;color:#fff;transform:scaleX(0.894);">READY</span>
<span class="t" style="left:769.7px;top:538.2px;font:400 11.5px/1 'Liberation Sans', sans-serif;color:#fff;transform:scaleX(0.928);">110%</span>
<span class="t" style="left:112.5px;top:511.8px;font:700 12.5px/1 'Liberation Sans', sans-serif;color:#217346;transform:scaleX(0.998);">Sheet1</span>
<span class="t" style="left:60.0px;top:196.0px;font:400 15px/1 'Liberation Sans', sans-serif;color:#505050;transform:scaleX(1.000);">A</span>
<span class="t" style="left:176.4px;top:196.0px;font:400 15px/1 'Liberation Sans', sans-serif;color:#505050;transform:scaleX(0.760);">B</span>
<span class="t" style="left:328.1px;top:196.0px;font:400 15px/1 'Liberation Sans', sans-serif;color:#505050;transform:scaleX(0.820);">C</span>
<span class="t" style="left:434.3px;top:196.0px;font:400 15px/1 'Liberation Sans', sans-serif;color:#505050;transform:scaleX(0.950);">D</span>
<span class="t" style="left:506.3px;top:196.0px;font:400 15px/1 'Liberation Sans', sans-serif;color:#505050;transform:scaleX(0.780);">E</span>
<span class="t" style="left:576.4px;top:196.0px;font:700 15px/1 'Liberation Sans', sans-serif;color:#217346;transform:scaleX(0.760);">F</span>
<span class="t" style="left:645.0px;top:196.0px;font:400 15px/1 'Liberation Sans', sans-serif;color:#505050;transform:scaleX(0.850);">G</span>
<span class="t" style="left:714.1px;top:196.0px;font:400 15px/1 'Liberation Sans', sans-serif;color:#505050;transform:scaleX(0.950);">H</span>
<span class="t" style="left:786.4px;top:196.0px;font:400 15px/1 'Liberation Sans', sans-serif;color:#505050;transform:scaleX(1.000);">I</span>
<span class="t" style="left:10.8px;top:217.0px;font:400 15px/1 'Liberation Sans', sans-serif;color:#505050;transform:scaleX(1.000);">1</span>
<span class="t" style="left:10.8px;top:239.0px;font:400 15px/1 'Liberation Sans', sans-serif;color:#505050;transform:scaleX(1.000);">2</span>
<span class="t" style="left:10.8px;top:261.0px;font:400 15px/1 'Liberation Sans', sans-serif;color:#505050;transform:scaleX(1.000);">3</span>
<span class="t" style="left:10.8px;top:283.0px;font:400 15px/1 'Liberation Sans', sans-serif;color:#505050;transform:scaleX(1.000);">4</span>
<span class="t" style="left:10.8px;top:305.0px;font:400 15px/1 'Liberation Sans', sans-serif;color:#505050;transform:scaleX(1.000);">5</span>
<span class="t" style="left:10.8px;top:327.0px;font:400 15px/1 'Liberation Sans', sans-serif;color:#505050;transform:scaleX(1.000);">6</span>
<span class="t" style="left:10.8px;top:349.0px;font:400 15px/1 'Liberation Sans', sans-serif;color:#505050;transform:scaleX(1.000);">7</span>
<span class="t" style="left:10.8px;top:371.0px;font:400 15px/1 'Liberation Sans', sans-serif;color:#505050;transform:scaleX(1.000);">8</span>
<span class="t" style="left:10.8px;top:393.0px;font:400 15px/1 'Liberation Sans', sans-serif;color:#505050;transform:scaleX(1.000);">9</span>
<span class="t" style="left:8.0px;top:415.0px;font:400 15px/1 'Liberation Sans', sans-serif;color:#505050;transform:scaleX(0.935);">10</span>
<span class="t" style="left:8.0px;top:437.0px;font:400 15px/1 'Liberation Sans', sans-serif;color:#505050;transform:scaleX(1.001);">11</span>
<span class="t" style="left:7.0px;top:459.0px;font:700 15px/1 'Liberation Sans', sans-serif;color:#217346;transform:scaleX(1.043);">12</span>
<span class="t" style="left:8.0px;top:481.0px;font:400 15px/1 'Liberation Sans', sans-serif;color:#505050;transform:scaleX(0.935);">13</span>
<span class="t" style="left:165.1px;top:241.2px;font:400 13.5px/1 'DejaVu Sans', 'Liberation Sans', sans-serif;color:#111;transform:scaleX(0.937);">Virat</span>
<span class="t" style="left:295.1px;top:241.2px;font:400 13.5px/1 'DejaVu Sans', 'Liberation Sans', sans-serif;color:#111;transform:scaleX(0.973);">30/12/1996</span>
<span class="t" style="left:60.7px;top:241.2px;font:400 13.5px/1 'DejaVu Sans', 'Liberation Sans', sans-serif;color:#111;transform:scaleX(1.000);">1</span>
<span class="t" style="left:158.1px;top:263.2px;font:400 13.5px/1 'DejaVu Sans', 'Liberation Sans', sans-serif;color:#111;transform:scaleX(0.921);">Raman</span>
<span class="t" style="left:295.1px;top:263.2px;font:400 13.5px/1 'DejaVu Sans', 'Liberation Sans', sans-serif;color:#111;transform:scaleX(0.973);">15/04/1997</span>
<span class="t" style="left:60.7px;top:263.2px;font:400 13.5px/1 'DejaVu Sans', 'Liberation Sans', sans-serif;color:#111;transform:scaleX(1.000);">2</span>
<span class="t" style="left:159.5px;top:285.2px;font:400 13.5px/1 'DejaVu Sans', 'Liberation Sans', sans-serif;color:#111;transform:scaleX(0.969);">Rohan</span>
<span class="t" style="left:295.1px;top:285.2px;font:400 13.5px/1 'DejaVu Sans', 'Liberation Sans', sans-serif;color:#111;transform:scaleX(0.973);">15/05/1997</span>
<span class="t" style="left:60.7px;top:285.2px;font:400 13.5px/1 'DejaVu Sans', 'Liberation Sans', sans-serif;color:#111;transform:scaleX(1.000);">3</span>
<span class="t" style="left:162.5px;top:307.2px;font:400 13.5px/1 'DejaVu Sans', 'Liberation Sans', sans-serif;color:#111;transform:scaleX(0.920);">Shani</span>
<span class="t" style="left:295.1px;top:307.2px;font:400 13.5px/1 'DejaVu Sans', 'Liberation Sans', sans-serif;color:#111;transform:scaleX(0.973);">30/01/1996</span>
<span class="t" style="left:60.7px;top:307.2px;font:400 13.5px/1 'DejaVu Sans', 'Liberation Sans', sans-serif;color:#111;transform:scaleX(1.000);">4</span>
<span class="t" style="left:164.8px;top:329.2px;font:400 13.5px/1 'DejaVu Sans', 'Liberation Sans', sans-serif;color:#111;transform:scaleX(0.919);">Sonu</span>
<span class="t" style="left:295.1px;top:329.2px;font:400 13.5px/1 'DejaVu Sans', 'Liberation Sans', sans-serif;color:#111;transform:scaleX(0.973);">20/12/1998</span>
<span class="t" style="left:60.7px;top:329.2px;font:400 13.5px/1 'DejaVu Sans', 'Liberation Sans', sans-serif;color:#111;transform:scaleX(1.000);">5</span>
<span class="t" style="left:160.2px;top:351.2px;font:400 13.5px/1 'DejaVu Sans', 'Liberation Sans', sans-serif;color:#111;transform:scaleX(0.946);">Sneha</span>
<span class="t" style="left:295.1px;top:351.2px;font:400 13.5px/1 'DejaVu Sans', 'Liberation Sans', sans-serif;color:#111;transform:scaleX(0.973);">30/10/1996</span>
<span class="t" style="left:60.7px;top:351.2px;font:400 13.5px/1 'DejaVu Sans', 'Liberation Sans', sans-serif;color:#111;transform:scaleX(1.000);">6</span>
<span class="t" style="left:158.3px;top:373.2px;font:400 13.5px/1 'DejaVu Sans', 'Liberation Sans', sans-serif;color:#111;transform:scaleX(1.003);">Pawan</span>
<span class="t" style="left:295.1px;top:373.2px;font:400 13.5px/1 'DejaVu Sans', 'Liberation Sans', sans-serif;color:#111;transform:scaleX(0.973);">30/12/1997</span>
<span class="t" style="left:60.7px;top:373.2px;font:400 13.5px/1 'DejaVu Sans', 'Liberation Sans', sans-serif;color:#111;transform:scaleX(1.000);">7</span>
<span class="t" style="left:158.3px;top:395.2px;font:400 13.5px/1 'DejaVu Sans', 'Liberation Sans', sans-serif;color:#111;transform:scaleX(0.900);">Shyam</span>
<span class="t" style="left:295.1px;top:395.2px;font:400 13.5px/1 'DejaVu Sans', 'Liberation Sans', sans-serif;color:#111;transform:scaleX(0.973);">30/11/1996</span>
<span class="t" style="left:60.7px;top:395.2px;font:400 13.5px/1 'DejaVu Sans', 'Liberation Sans', sans-serif;color:#111;transform:scaleX(1.000);">8</span>
<span class="t" style="left:157.2px;top:417.2px;font:400 13.5px/1 'DejaVu Sans', 'Liberation Sans', sans-serif;color:#111;transform:scaleX(0.978);">Asmita</span>
<span class="t" style="left:295.1px;top:417.2px;font:400 13.5px/1 'DejaVu Sans', 'Liberation Sans', sans-serif;color:#111;transform:scaleX(0.973);">13/08/1996</span>
<span class="t" style="left:60.7px;top:417.2px;font:400 13.5px/1 'DejaVu Sans', 'Liberation Sans', sans-serif;color:#111;transform:scaleX(1.000);">9</span>
<span class="t" style="left:159.1px;top:439.2px;font:400 13.5px/1 'DejaVu Sans', 'Liberation Sans', sans-serif;color:#111;transform:scaleX(0.895);">Sonam</span>
<span class="t" style="left:295.1px;top:439.2px;font:400 13.5px/1 'DejaVu Sans', 'Liberation Sans', sans-serif;color:#111;transform:scaleX(0.973);">30/12/1998</span>
<span class="t" style="left:57.7px;top:439.2px;font:400 13.5px/1 'DejaVu Sans', 'Liberation Sans', sans-serif;color:#111;transform:scaleX(0.873);">10</span>
<span class="t" style="left:160.8px;top:461.2px;font:400 13.5px/1 'DejaVu Sans', 'Liberation Sans', sans-serif;color:#111;transform:scaleX(0.962);">Geeta</span>
<span class="t" style="left:295.1px;top:461.2px;font:400 13.5px/1 'DejaVu Sans', 'Liberation Sans', sans-serif;color:#111;transform:scaleX(0.973);">30/09/1997</span>
<span class="t" style="left:57.7px;top:461.2px;font:400 13.5px/1 'DejaVu Sans', 'Liberation Sans', sans-serif;color:#111;transform:scaleX(0.873);">11</span>
<span class="t" style="left:47.2px;top:219.2px;font:700 13.5px/1 'DejaVu Sans', 'Liberation Sans', sans-serif;color:#000;transform:scaleX(0.888);">S.No.</span>
<span class="t" style="left:157.2px;top:219.2px;font:700 13.5px/1 'DejaVu Sans', 'Liberation Sans', sans-serif;color:#000;transform:scaleX(0.886);">Names</span>
<span class="t" style="left:314.3px;top:219.2px;font:700 13.5px/1 'DejaVu Sans', 'Liberation Sans', sans-serif;color:#000;transform:scaleX(0.869);">D.O.B</span>
<span class="t" style="left:680.4px;top:8.0px;font:700 14px/1 'Liberation Sans', sans-serif;color:#707070;transform:scaleX(1.000);">?</span>
<span class="t" style="left:184.6px;top:87.0px;font:400 12px/1 'Liberation Sans', sans-serif;color:#444;transform:scaleX(1.120);">A</span>
<span class="t" style="left:207.6px;top:88.5px;font:400 10px/1 'Liberation Sans', sans-serif;color:#444;transform:scaleX(1.050);">A</span>
<span class="t" style="left:174.6px;top:106.8px;font:400 12.5px/1 'Liberation Sans', sans-serif;color:#444;transform:scaleX(1.120);">A</span>
</div>
</div>
</body></html>
